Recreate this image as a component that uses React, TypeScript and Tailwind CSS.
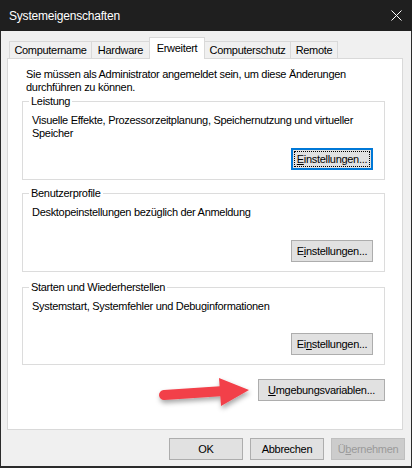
import React from "react"

function Btn({ children, w, focused, disabled }: { children: React.ReactNode; w: string; focused?: boolean; disabled?: boolean }) {
  if (focused) {
    return (
      <button className={`${w} h-[22px] border-2 border-[#0078d7] bg-[#e1e1e1] p-[1px] flex`}>
        <span className="flex-1 flex items-center justify-center border border-dotted border-black text-[11px] text-black">
          {children}
        </span>
      </button>
    )
  }
  return (
    <button
      className={`${w} h-[22px] border flex items-center justify-center text-[11px] ${
        disabled ? "border-[#bfbfbf] bg-[#cccccc] text-[#9a9a9a]" : "border-[#adadad] bg-[#e1e1e1] text-black"
      }`}
    >
      {children}
    </button>
  )
}

function Group({ title, text, button, h }: { title: string; text: React.ReactNode; button: React.ReactNode; h: string }) {
  return (
    <fieldset className="border border-[#dcdcdc] pl-[9px] w-[363px]">
      <legend className="ml-[-3px] px-[2px] text-[11px] leading-[13px] text-black">{title}</legend>
      <div className={`flex flex-col ${h} pt-[6px] pb-[9px] pr-[11px]`}>
        <p className="text-[11px] leading-[13px] text-black whitespace-nowrap">{text}</p>
        <div className="mt-auto self-end">{button}</div>
      </div>
    </fieldset>
  )
}

export default function App() {
  return (
    <div className="w-[412px] h-[468px] flex flex-col font-['Liberation_Sans',Arial,sans-serif]">
      {/* Title bar */}
      <div className="h-[31px] bg-[#1f1f1f] flex items-center justify-between pl-[9px] pr-[10px]">
        <span className="text-white text-[12px] tracking-[-0.2px]">Systemeigenschaften</span>
        <svg width="11" height="11" viewBox="0 0 11 11">
          <path d="M0.5 0.5 L10.5 10.5 M10.5 0.5 L0.5 10.5" stroke="#ffffff" strokeWidth="1" />
        </svg>
      </div>

      {/* Body */}
      <div className="flex-1 flex flex-col bg-[#f0f0f0] border-x border-b-2 border-[#2b2b2b] pt-[6px] relative tracking-[-0.3px]">
        {/* Tabs */}
        <div className="flex items-start h-[22px] pl-[8px] text-[11px] text-black">
          <div className="w-[82px] h-[17px] mt-[4px] border-l border-t border-[#d9d9d9] flex items-center justify-center">Computername</div>
          <div className="w-[58px] h-[17px] mt-[4px] border-l border-t border-[#d9d9d9] flex items-center justify-center">Hardware</div>
          <div className="w-[56px] h-[22px] bg-white border-l border-t border-r border-[#d9d9d9] flex items-center justify-center pb-[1px] relative z-10">Erweitert</div>
          <div className="w-[86px] h-[17px] mt-[4px] border-t border-r border-[#d9d9d9] flex items-center justify-center">Computerschutz</div>
          <div className="w-[47px] h-[17px] mt-[4px] border-t border-r border-[#d9d9d9] flex items-center justify-center">Remote</div>
        </div>

        {/* Panel */}
        <div className="ml-[6px] -mt-px w-[396px] h-[372px] bg-white border border-[#d9d9d9] flex flex-col pl-[14px] pt-[9px]">
          <p className="ml-[4px] text-[11px] leading-[13px] text-black">
            Sie müssen als Administrator angemeldet sein, um diese Änderungen
            <br />
            durchführen zu können.
          </p>

          <div className="mt-[1px]">
            <Group
              title="Leistung"
              h="h-[71px]"
              text={
                <>
                  Visuelle Effekte, Prozessorzeitplanung, Speichernutzung und virtueller
                  <br />
                  Speicher
                </>
              }
              button={
                <Btn w="w-[82px]" focused>
                  <span className="underline">E</span>instellungen...
                </Btn>
              }
            />
          </div>

          <div className="mt-[7px]">
            <Group
              title="Benutzerprofile"
              h="h-[71px]"
              text="Desktopeinstellungen bezüglich der Anmeldung"
              button={
                <Btn w="w-[82px]">
                  E<span className="underline">i</span>nstellungen...
                </Btn>
              }
            />
          </div>

          <div className="mt-[9px]">
            <Group
              title="Starten und Wiederherstellen"
              h="h-[70px]"
              text="Systemstart, Systemfehler und Debuginformationen"
              button={
                <Btn w="w-[82px]">
                  Ei<span className="underline">n</span>stellungen...
                </Btn>
              }
            />
          </div>

          <div className="mt-[14px] w-[363px] flex justify-end">
            <Btn w="w-[127px]">
              <span className="underline">U</span>mgebungsvariablen...
            </Btn>
          </div>
        </div>

        {/* Footer */}
        <div className="flex justify-end gap-[7px] pr-[6px] mt-[8px]">
          <Btn w="w-[74px]">OK</Btn>
          <Btn w="w-[74px]">Abbrechen</Btn>
          <Btn w="w-[74px]" disabled>
            Ü<span className="underline">b</span>ernehmen
          </Btn>
        </div>

        {/* Red annotation arrow */}
        <svg className="absolute left-[149px] top-[341px]" width="112" height="48" viewBox="0 0 112 48">
          <defs>
            <filter id="sh" x="-20%" y="-30%" width="150%" height="180%">
              <feDropShadow dx="1" dy="3" stdDeviation="2.5" floodColor="#000000" floodOpacity="0.35" />
            </filter>
          </defs>
          <g filter="url(#sh)">
            <path d="M14 23 L74 19" stroke="#f2404a" strokeWidth="10" strokeLinecap="round" />
            <path d="M69 6 L99 18 L71 34 Z" fill="#f2404a" />
          </g>
        </svg>
      </div>
    </div>
  )
}
